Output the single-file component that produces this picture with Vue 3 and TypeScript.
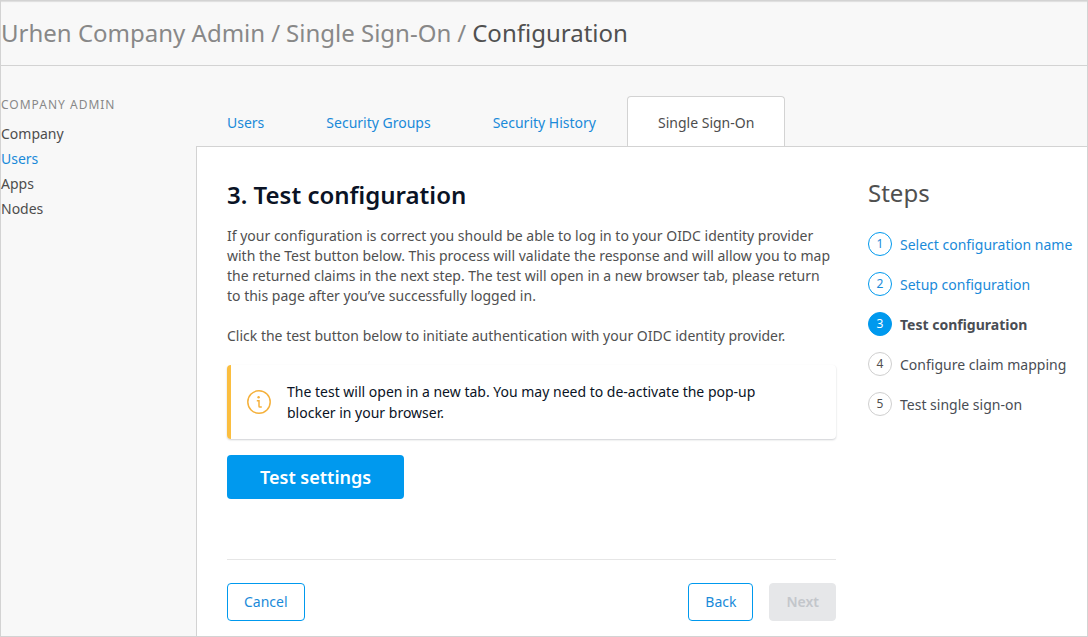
<script setup lang="ts">
interface NavItem {
  label: string
  active?: boolean
}

interface Step {
  label: string
  state: 'done' | 'current' | 'todo'
}

const sideLinks: NavItem[] = [
  { label: 'Company' },
  { label: 'Users', active: true },
  { label: 'Apps' },
  { label: 'Nodes' },
]

const tabs: NavItem[] = [
  { label: 'Users' },
  { label: 'Security Groups' },
  { label: 'Security History' },
  { label: 'Single Sign-On', active: true },
]

const steps: Step[] = [
  { label: 'Select configuration name', state: 'done' },
  { label: 'Setup configuration', state: 'done' },
  { label: 'Test configuration', state: 'current' },
  { label: 'Configure claim mapping', state: 'todo' },
  { label: 'Test single sign-on', state: 'todo' },
]
</script>

<template>
  <div class="page">
    <header class="header">
      <nav class="crumbs" aria-label="Breadcrumb">
        <a href="#">Urhen Company Admin</a>
        <span>/</span>
        <a href="#">Single Sign-On</a>
        <span>/</span>
        <span class="here" aria-current="page">Configuration</span>
      </nav>
    </header>

    <div class="body">
      <aside class="sidebar">
        <h2 class="side-title">COMPANY ADMIN</h2>
        <nav class="side-nav" aria-label="Company admin">
          <a
            v-for="item in sideLinks"
            :key="item.label"
            href="#"
            :class="{ active: item.active }"
          >{{ item.label }}</a>
        </nav>
      </aside>

      <div class="content">
        <nav class="tabs" aria-label="Sections">
          <a
            v-for="tab in tabs"
            :key="tab.label"
            href="#"
            class="tab"
            :class="{ active: tab.active }"
            :aria-current="tab.active ? 'page' : undefined"
          >{{ tab.label }}</a>
        </nav>

        <div class="panel">
          <main class="main">
            <h1 class="title">3. Test configuration</h1>
            <p class="text">
              If your configuration is correct you should be able to log in to your OIDC identity
              provider with the Test button below. This process will validate the response and will
              allow you to map the returned claims in the next step. The test will open in a new
              browser tab, please return to this page after you’ve successfully logged in.
            </p>
            <p class="text">
              Click the test button below to initiate authentication with your OIDC identity provider.
            </p>

            <div class="notice" role="note">
              <svg class="notice-icon" viewBox="0 0 24 24" width="24" height="24" aria-hidden="true">
                <circle cx="12" cy="12" r="11.2" fill="none" stroke="#f5b13c" stroke-width="1.5" />
                <circle cx="11.6" cy="7.2" r="1.2" fill="#f5b13c" />
                <path
                  d="M9.8 10.7H12V16.2Q12 17 12.8 17H14.8"
                  fill="none"
                  stroke="#f5b13c"
                  stroke-width="1.5"
                />
              </svg>
              <p>
                The test will open in a new tab. You may need to de-activate the pop-up blocker in
                your browser.
              </p>
            </div>

            <button type="button" class="primary">Test settings</button>

            <footer class="actions">
              <button type="button" class="btn">Cancel</button>
              <div class="pair">
                <button type="button" class="btn">Back</button>
                <button type="button" class="btn" disabled>Next</button>
              </div>
            </footer>
          </main>

          <aside class="steps">
            <h2>Steps</h2>
            <ol>
              <li v-for="(step, i) in steps" :key="step.label" :class="step.state">
                <span class="num">{{ i + 1 }}</span>
                <a v-if="step.state === 'done'" href="#" class="label">{{ step.label }}</a>
                <span v-else class="label">{{ step.label }}</span>
              </li>
            </ol>
          </aside>
        </div>
      </div>
    </div>
  </div>
</template>

<style>
body {
  margin: 0;
}
</style>

<style scoped>
.page {
  box-sizing: border-box;
  min-height: 100vh;
  display: flex;
  flex-direction: column;
  border: 1px solid #d3d3d3;
  background: #f8f8f8;
  color: #505050;
  font: 14px/20px "Noto Sans", "Open Sans", sans-serif;
}

.page * {
  box-sizing: border-box;
}

a {
  color: #1a8ad9;
  text-decoration: none;
}

h1,
h2,
p,
ol {
  margin: 0;
  padding: 0;
}

.header {
  padding: 16px 0;
  border-bottom: 1px solid #d3d3d3;
  box-shadow: inset 0 2px 1px -1px #dddddd;
}

.crumbs {
  display: flex;
  gap: 6px;
  font-size: 24px;
  line-height: 32px;
  color: #888888;
}

.crumbs a {
  color: inherit;
}

.crumbs .here {
  color: #505050;
}

.body {
  flex: 1;
  display: flex;
  padding-top: 30px;
}

.sidebar {
  flex: 0 0 195px;
}

.side-title {
  font-size: 12px;
  font-weight: 400;
  line-height: 18px;
  letter-spacing: 1px;
  color: #888888;
}

.side-nav {
  display: flex;
  flex-direction: column;
  align-items: flex-start;
  margin-top: 7px;
}

.side-nav a {
  line-height: 25px;
  color: #4d4d4d;
}

.side-nav a.active {
  color: #1a8ad9;
}

.content {
  flex: 1;
  min-width: 0;
  display: flex;
  flex-direction: column;
}

.tabs {
  display: flex;
}

.tab {
  padding: 16px 30px 13px;
  border: 1px solid transparent;
  border-bottom: 0;
}

.tab.active {
  border-color: #d3d3d3;
  border-radius: 4px 4px 0 0;
  background: #ffffff;
  color: #4d4d4d;
}

.panel {
  flex: 1;
  display: grid;
  grid-template-columns: minmax(0, 1fr) 204px;
  column-gap: 32px;
  padding: 30px 15px 15px 30px;
  border-top: 1px solid #d3d3d3;
  border-left: 1px solid #d3d3d3;
  background: #ffffff;
}

.title {
  margin-bottom: 13px;
  font-size: 24px;
  font-weight: 600;
  line-height: 36px;
  color: #0a1325;
}

.text + .text {
  margin-top: 20px;
}

.notice {
  display: flex;
  align-items: center;
  gap: 16px;
  margin-top: 19px;
  padding: 16px 64px 16px 16px;
  border-left: 4px solid #fbbe3f;
  border-radius: 4px;
  box-shadow: 0 1px 2px rgba(10, 19, 37, 0.2);
  color: #0a1325;
  line-height: 21px;
}

.notice-icon {
  flex: none;
}

.primary {
  display: block;
  height: 44px;
  margin-top: 16px;
  padding: 0 33px;
  border: 0;
  border-radius: 4px;
  background: #0099ee;
  color: #ffffff;
  font: 600 18px/24px "Noto Sans", "Open Sans", sans-serif;
}

.actions {
  display: flex;
  justify-content: space-between;
  margin-top: 60px;
  padding-top: 23px;
  border-top: 1px solid #e6e6e6;
}

.pair {
  display: flex;
  gap: 16px;
}

.btn {
  height: 38px;
  padding: 0 16px;
  border: 1px solid #0099ee;
  border-radius: 4px;
  background: #ffffff;
  color: #1a8ad9;
  font: 14px/20px "Noto Sans", "Open Sans", sans-serif;
}

.btn:disabled {
  border-color: #e6e7e9;
  background: #e6e7e9;
  color: #c3c6cb;
  font-weight: 600;
}

.steps h2 {
  margin-bottom: 23px;
  font-size: 24px;
  font-weight: 400;
  line-height: 32px;
}

.steps ol {
  display: grid;
  gap: 14px;
  list-style: none;
}

.steps li {
  display: flex;
  gap: 8px;
  align-items: flex-start;
  white-space: nowrap;
}

.label {
  line-height: 26px;
}

.num {
  flex: none;
  width: 24px;
  height: 24px;
  border: 1px solid #cfcfcf;
  border-radius: 50%;
  font-size: 12px;
  line-height: 22px;
  text-align: center;
}

.current .label,
.todo .label {
  color: #494d54;
}

.done .num {
  border-color: #0099ee;
  color: #1a8ad9;
}

.current .num {
  border-color: #0099ee;
  background: #0099ee;
  color: #ffffff;
}

.current .label {
  font-weight: 700;
}
</style>
